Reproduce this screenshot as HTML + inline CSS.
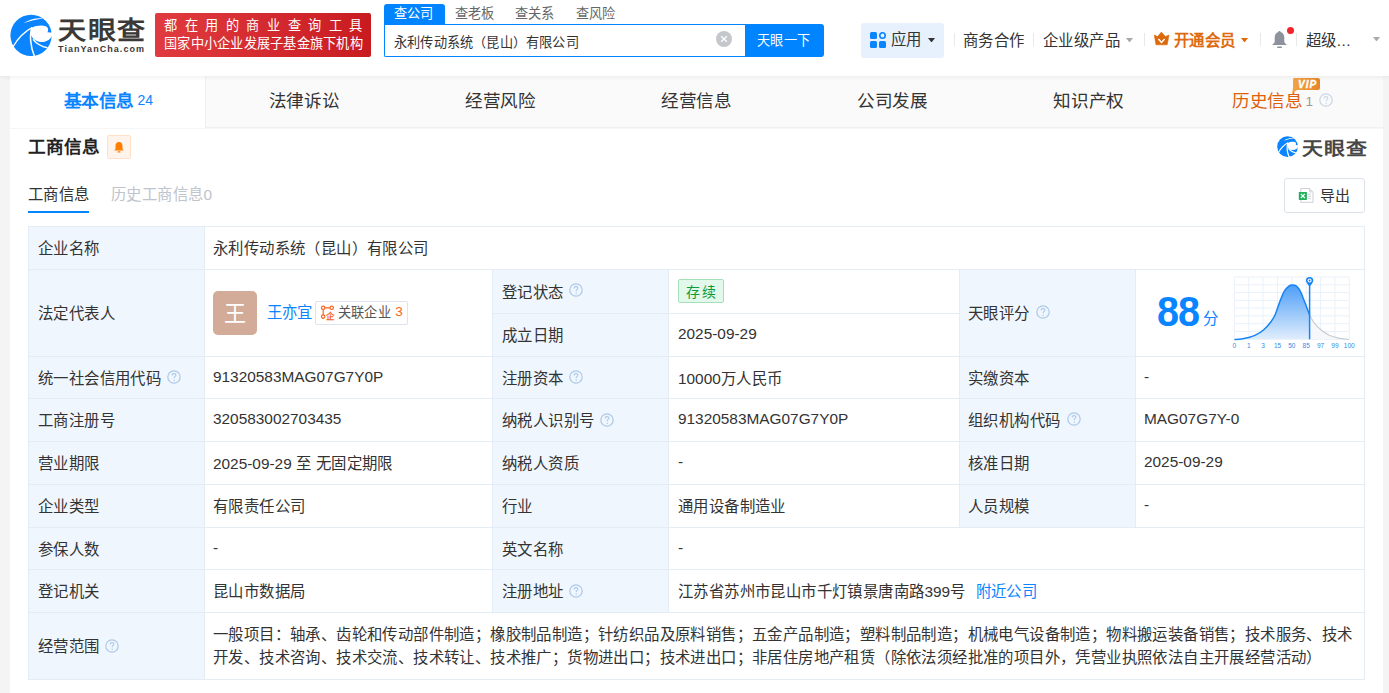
<!DOCTYPE html>
<html lang="zh-CN"><head><meta charset="utf-8">
<style>
*{box-sizing:border-box;margin:0;padding:0}
html,body{width:1389px;height:693px;overflow:hidden;background:#f4f4f4;font-family:"Liberation Sans",sans-serif;color:#333}
body{position:relative}
.a{position:absolute;white-space:nowrap}
.t{position:absolute;white-space:nowrap;font-size:15.4px;color:#333;display:flex;align-items:center}
#hdr{position:absolute;left:0;top:0;width:1389px;height:76px;background:#fff;box-shadow:0 1px 5px rgba(0,0,0,.07);z-index:2}
#card{position:absolute;left:10px;top:76px;width:1373px;height:640px;background:#fff}
.hl{position:absolute;height:1px;background:#e4ecf5}
.vl{position:absolute;width:1px;background:#e4ecf5}
.lb{position:absolute;background:#f0f6fd}
</style></head>
<body>

<div id="hdr">
  <svg class="a" style="left:8px;top:12px" width="48" height="48" viewBox="0 0 693 693">
    <circle cx="333" cy="337" r="298" fill="#0a84ff"/>
    <path d="M340 228 C400 200 480 185 545 205 C580 220 590 260 568 292 L660 300 L645 318 C625 400 540 445 460 432 C410 422 370 400 345 360 C325 330 325 270 340 228 Z" fill="#fff"/>
    <path d="M222 162 C300 108 420 80 510 93 C420 108 310 126 222 162 Z" fill="#fff"/>
    <path d="M70 505 C150 370 240 280 348 226" stroke="#fff" stroke-width="20" fill="none"/>
    <path d="M345 228 C310 320 320 500 385 650" stroke="#fff" stroke-width="22" fill="none"/>
    <path d="M360 395 C420 470 490 500 570 515" stroke="#fff" stroke-width="22" fill="none"/>
  </svg>
  <div class="a" style="left:57.5px;top:14.5px;font-size:25px;line-height:30px;font-weight:bold;color:#3b3838;letter-spacing:1.5px;transform:scaleX(1.12);transform-origin:left">天眼查</div>
  <div class="a" style="left:58px;top:43px;font-size:9px;line-height:12px;font-weight:bold;color:#3b3838;letter-spacing:1.05px">TianYanCha.com</div>
  <div class="a" style="left:155px;top:13px;width:216px;height:44px;border-radius:2px;background:linear-gradient(90deg,#e03b40,#c81b20)"></div>
  <div class="a" style="left:164px;top:15px;font-size:13.2px;color:#fff;letter-spacing:7.6px">都在用的商业查询工具</div>
  <div class="a" style="left:164px;top:33px;font-size:13.2px;color:#fff;letter-spacing:0.25px">国家中小企业发展子基金旗下机构</div>

  <div class="a" style="left:384px;top:4px;width:61px;height:21px;background:#0084ff;border-radius:3px 3px 0 0"></div>
  <div class="a" style="left:394px;top:3px;font-size:13.2px;color:#fff;letter-spacing:0.2px">查公司</div>
  <div class="a" style="left:455px;top:3px;font-size:13.2px;color:#666;letter-spacing:0.2px">查老板</div>
  <div class="a" style="left:515px;top:3px;font-size:13.2px;color:#666;letter-spacing:0.2px">查关系</div>
  <div class="a" style="left:576px;top:3px;font-size:13.2px;color:#666;letter-spacing:0.2px">查风险</div>
  <div class="a" style="left:384px;top:24px;width:362px;height:33px;border:1px solid #0084ff;border-right:none;border-radius:0 0 0 2px"></div>
  <div class="a" style="left:394px;top:31.5px;font-size:13.2px;color:#333;letter-spacing:0.2px">永利传动系统（昆山）有限公司</div>
  <svg class="a" style="left:716px;top:31px" width="16" height="16" viewBox="0 0 16 16"><circle cx="8" cy="8" r="8" fill="#c4c7cc"/><path d="M5.2 5.2 L10.8 10.8 M10.8 5.2 L5.2 10.8" stroke="#fff" stroke-width="1.3"/></svg>
  <div class="a" style="left:745px;top:24px;width:79px;height:33px;background:#0084ff;border-radius:0 3px 3px 0"></div>
  <div class="a" style="left:757px;top:30px;font-size:13.2px;color:#fff;letter-spacing:0.3px">天眼一下</div>

  <div class="a" style="left:861px;top:23px;width:83px;height:35px;background:#e6f1fd;border-radius:3px"></div>
  <svg class="a" style="left:870px;top:32px" width="16" height="16" viewBox="0 0 16 16"><rect x="0" y="0" width="7" height="7" rx="1.5" fill="#0a84ff"/><circle cx="12.5" cy="3.5" r="2.7" fill="none" stroke="#0a84ff" stroke-width="1.6"/><rect x="0" y="9" width="7" height="7" rx="1.5" fill="#0a84ff"/><rect x="9" y="9" width="7" height="7" rx="1.5" fill="#0a84ff"/></svg>
  <div class="a" style="left:891px;top:27px;font-size:15.4px;color:#333;letter-spacing:0.4px">应用</div>
  <svg class="a" style="left:927.5px;top:37.5px" width="7" height="4.5" viewBox="0 0 7 4.5"><path d="M0 0 L7 0 L3.5 4.5 Z" fill="#333"/></svg>
  <div class="a" style="left:954px;top:33px;width:1px;height:13px;background:#e8e8e8"></div>
  <div class="a" style="left:963px;top:27.5px;font-size:15.4px;color:#333;letter-spacing:0.4px">商务合作</div>
  <div class="a" style="left:1033px;top:33px;width:1px;height:13px;background:#e8e8e8"></div>
  <div class="a" style="left:1043px;top:27.5px;font-size:15.4px;color:#333;letter-spacing:0.4px">企业级产品</div>
  <svg class="a" style="left:1125.5px;top:37.5px" width="7" height="4.5" viewBox="0 0 7 4.5"><path d="M0 0 L7 0 L3.5 4.5 Z" fill="#aaa"/></svg>
  <div class="a" style="left:1144px;top:33px;width:1px;height:13px;background:#e8e8e8"></div>
  <svg class="a" style="left:1150px;top:28px" width="24" height="22" viewBox="0 0 24 22"><path d="M4.3 7.1 L7.6 8.6 L11.4 4.1 L15.3 8.6 L19 7.1 L17.2 16.8 L6 16.8 Z" fill="#dc6a0d" stroke="#dc6a0d" stroke-width="0.6" stroke-linejoin="round"/><path d="M8.4 10.9 L11.5 14.4 L14.6 10.9" stroke="#fff" stroke-width="1.5" fill="none"/></svg>
  <div class="a" style="left:1174px;top:27.5px;font-size:15.4px;font-weight:bold;color:#de6b10;letter-spacing:0.4px">开通会员</div>
  <svg class="a" style="left:1240.5px;top:37.5px" width="7" height="4.5" viewBox="0 0 7 4.5"><path d="M0 0 L7 0 L3.5 4.5 Z" fill="#dc6a0d"/></svg>
  <div class="a" style="left:1260px;top:33px;width:1px;height:13px;background:#e8e8e8"></div>
  <svg class="a" style="left:1271px;top:30px" width="17" height="19" viewBox="0 0 17 19"><path d="M8.5 1 C9.3 1 9.6 1.5 9.6 2 C12 2.6 13.3 4.8 13.3 7.5 L13.3 11.5 C13.3 12.6 14.2 13.6 15.6 14.6 L15.6 15 L1.4 15 L1.4 14.6 C2.8 13.6 3.7 12.6 3.7 11.5 L3.7 7.5 C3.7 4.8 5 2.6 7.4 2 C7.4 1.5 7.7 1 8.5 1 Z" fill="#8d939b"/><rect x="6" y="16.6" width="5" height="1.4" rx="0.7" fill="#8d939b"/></svg>
  <div class="a" style="left:1287px;top:27px;width:7px;height:7px;border-radius:50%;background:#f5222d"></div>
  <div class="a" style="left:1296px;top:33px;width:1px;height:13px;background:#e8e8e8"></div>
  <div class="a" style="left:1306px;top:27.5px;font-size:15.4px;color:#333;letter-spacing:0.4px">超级...</div>
  <svg class="a" style="left:1373px;top:36.5px" width="7" height="4.5" viewBox="0 0 7 4.5"><path d="M0 0 L7 0 L3.5 4.5 Z" fill="#aaa"/></svg>
</div>

<div id="card"></div>
<div class="a" style="left:10px;top:76px;width:1373px;height:52px;background:#fafafa;border-bottom:1px solid #f0f0f0"></div>
<div class="a" style="left:10px;top:76px;width:195px;height:52px;background:#fff"></div>
<div class="a" style="left:10px;top:128px;width:1373px;height:1px;background:#f6f6f6"></div>
<div class="a" style="left:63.5px;top:87px;font-size:17.6px;font-weight:bold;color:#0a84ff;letter-spacing:-0.4px">基本信息<span style="font-size:14px;font-weight:normal;margin-left:3.5px;position:relative;top:-2.5px;letter-spacing:0">24</span></div>
<div class="a" style="left:205px;top:76px;width:1px;height:52px;background:#f0f0f0"></div>
<div class="a" style="left:268.8px;top:87px;font-size:17.6px;color:#333;letter-spacing:-0.4px">法律诉讼</div>
<div class="a" style="left:465.0px;top:87px;font-size:17.6px;color:#333;letter-spacing:-0.4px">经营风险</div>
<div class="a" style="left:661.1px;top:87px;font-size:17.6px;color:#333;letter-spacing:-0.4px">经营信息</div>
<div class="a" style="left:857.2px;top:87px;font-size:17.6px;color:#333;letter-spacing:-0.4px">公司发展</div>
<div class="a" style="left:1053.4px;top:87px;font-size:17.6px;color:#333;letter-spacing:-0.4px">知识产权</div>
<div class="a" style="left:1232px;top:87px;font-size:17.6px;color:#e0600a;letter-spacing:-0.4px">历史信息<span style="font-size:13.5px;color:#999;margin-left:3px;position:relative;top:-1.5px">1</span></div>
<svg class="a" style="left:1319px;top:93px" width="14" height="14" viewBox="0 0 14 14"><circle cx="7" cy="7" r="6.2" fill="none" stroke="#c8d6e5" stroke-width="1.2"/><path d="M5.1 5.4 C5.1 4.2 6 3.6 7 3.6 C8.1 3.6 8.9 4.3 8.9 5.2 C8.9 6.3 7.4 6.5 7.2 7.6 L7.2 8.3" fill="none" stroke="#c8d6e5" stroke-width="1.1"/><circle cx="7.2" cy="10.2" r="0.7" fill="#c8d6e5"/></svg>
<svg class="a" style="left:1291px;top:78px" width="30" height="16" viewBox="0 0 30 16"><defs><linearGradient id="vg" x1="0" x2="1"><stop offset="0" stop-color="#f3a545"/><stop offset="1" stop-color="#e6862a"/></linearGradient></defs><path d="M3 0 H27 Q29 0 29 2 V10 Q29 12 27 12 H6 L1 15.5 L2 10 V2 Q2 0 3 0 Z" fill="url(#vg)"/><text x="16.6" y="10.2" text-anchor="middle" font-family="Liberation Sans" font-weight="bold" font-style="italic" font-size="10" letter-spacing="1.1" fill="#fff" stroke="#fff" stroke-width="0.35">VIP</text></svg>
<div class="a" style="left:28px;top:133px;font-size:17.6px;font-weight:bold;color:#222">工商信息</div>
<div class="a" style="left:107px;top:135px;width:24px;height:24px;background:#fff4eb;border:1px solid #ffe0c7;border-radius:2px"></div>
<svg class="a" style="left:113px;top:141px" width="12" height="12" viewBox="0 0 12 12"><path d="M6 1 C3.5 1 2.5 3 2.5 5 L2.5 8 L1.3 9.5 L10.7 9.5 L9.5 8 L9.5 5 C9.5 3 8.5 1 6 1 Z" fill="#ff7d00"/><rect x="4.5" y="10.3" width="3" height="1.3" rx="0.6" fill="#ff7d00"/></svg>
<svg class="a" style="left:1276px;top:135px" width="24" height="24" viewBox="0 0 693 693">
    <circle cx="333" cy="337" r="298" fill="#0a84ff"/>
    <path d="M340 228 C400 200 480 185 545 205 C580 220 590 260 568 292 L660 300 L645 318 C625 400 540 445 460 432 C410 422 370 400 345 360 C325 330 325 270 340 228 Z" fill="#fff"/>
    <path d="M222 166 C300 104 420 76 515 91 C420 112 310 130 222 166 Z" fill="#fff"/>
    <path d="M70 505 C150 370 240 280 348 226" stroke="#fff" stroke-width="34" fill="none"/>
    <path d="M345 228 C310 320 320 500 385 650" stroke="#fff" stroke-width="34" fill="none"/>
    <path d="M360 395 C420 470 490 500 570 515" stroke="#fff" stroke-width="34" fill="none"/>
  </svg>
<div class="a" style="left:1302px;top:135.5px;font-size:18px;line-height:26px;font-weight:bold;color:#474747;letter-spacing:0.8px;transform:scaleX(1.16);transform-origin:left">天眼查</div>
<div class="a" style="left:28px;top:181.5px;font-size:15.4px;color:#333;letter-spacing:0.4px">工商信息</div>
<div class="a" style="left:28px;top:211px;width:61px;height:2px;background:#0084ff"></div>
<div class="a" style="left:111px;top:181.5px;font-size:15.4px;color:#c0c4cc;letter-spacing:0.4px">历史工商信息0</div>
<div class="a" style="left:1284px;top:178px;width:81px;height:35px;border:1px solid #dde2ea;border-radius:3px"></div>
<svg class="a" style="left:1298px;top:187px" width="17" height="17" viewBox="0 0 17 17"><path d="M2.8 1.5 H11.6 L15 4.9 V15.3 H2.8 Z" fill="#fff" stroke="#cdd0d6" stroke-width="1"/><path d="M11.6 1.5 V4.9 H15" fill="#e6e8eb" stroke="#cdd0d6" stroke-width="0.9"/><rect x="0.8" y="5" width="8.1" height="7.9" rx="0.6" fill="#1fb25a"/><path d="M2.9 6.9 L6.8 11 M6.8 6.9 L2.9 11" stroke="#fff" stroke-width="1.2"/><path d="M10.1 7.3 H12.9 M10.1 9.4 H12.9 M10.1 11.4 H12.9" stroke="#c8ccd2" stroke-width="0.9"/></svg>
<div class="a" style="left:1320px;top:183.5px;font-size:15px;color:#333;letter-spacing:0.4px">导出</div>
<div class="lb" style="left:28px;top:226px;width:176px;height:453px"></div>
<div class="lb" style="left:492px;top:269px;width:176px;height:343px"></div>
<div class="lb" style="left:959px;top:269px;width:176px;height:258px"></div>
<div class="a" style="left:28px;top:226px;width:1337px;height:454px;border:1px solid #e4ecf5"></div>
<div class="hl" style="left:28px;top:269px;width:1337px"></div>
<div class="hl" style="left:492px;top:313px;width:468px"></div>
<div class="hl" style="left:28px;top:356px;width:1337px"></div>
<div class="hl" style="left:28px;top:398px;width:1337px"></div>
<div class="hl" style="left:28px;top:441px;width:1337px"></div>
<div class="hl" style="left:28px;top:484px;width:1337px"></div>
<div class="hl" style="left:28px;top:527px;width:1337px"></div>
<div class="hl" style="left:28px;top:569px;width:1337px"></div>
<div class="hl" style="left:28px;top:612px;width:1337px"></div>
<div class="vl" style="left:204px;top:226px;height:454px"></div>
<div class="vl" style="left:492px;top:269px;height:344px"></div>
<div class="vl" style="left:668px;top:269px;height:344px"></div>
<div class="vl" style="left:959px;top:269px;height:259px"></div>
<div class="vl" style="left:1135px;top:269px;height:259px"></div>
<div class="t" style="left:38px;top:226px;height:42px;"><span><span style="letter-spacing:0.4px">企业名称</span></span></div>
<div class="t" style="left:213px;top:226px;height:42px;"><span><span style="letter-spacing:0.4px">永利传动系统（昆山）有限公司</span></span></div>
<div class="t" style="left:38px;top:269px;height:86px;"><span><span style="letter-spacing:0.4px">法定代表人</span></span></div>
<div class="a" style="left:213px;top:291px;width:44px;height:44px;border-radius:5px;background:#d2ab99"></div>
<div class="a" style="left:213px;top:288.5px;width:44px;height:44px;display:flex;align-items:center;justify-content:center;font-size:22px;color:#fff">王</div>
<div class="t" style="left:266.5px;top:268px;height:86px;color:#0a84ff"><span><span style="letter-spacing:0.4px">王亦宜</span></span></div>
<div class="a" style="left:315px;top:301px;width:93px;height:24px;border:1px solid #dde3ef;border-radius:2px"></div>
<svg class="a" style="left:320px;top:304px" width="16" height="17" viewBox="0 0 16 17"><circle cx="3.2" cy="3.8" r="1.7" fill="none" stroke="#f5661e" stroke-width="1.2"/><circle cx="11.7" cy="3.8" r="1.7" fill="none" stroke="#f5661e" stroke-width="1.2"/><circle cx="3.2" cy="12.6" r="1.7" fill="none" stroke="#f5661e" stroke-width="1.2"/><path d="M4.9 3.8 H10 M3.2 5.5 V10.9" stroke="#f5661e" stroke-width="1.2"/><text x="10.3" y="14.6" text-anchor="middle" font-family="Liberation Sans" font-weight="bold" font-size="8.5" fill="#f5661e">企</text></svg>
<div class="t" style="left:338px;top:268px;height:86px;font-size:13.2px;color:#555"><span><span style="letter-spacing:0.2px">关联企业</span><span style="color:#f5661e;margin-left:4.5px;font-size:13.6px;position:relative;top:-0.5px">3</span></span></div>
<div class="t" style="left:502px;top:269px;height:43px;"><span><span style="letter-spacing:0.4px">登记状态</span></span></div>
<svg class="a" style="left:569px;top:283px" width="14" height="14" viewBox="0 0 14 14"><circle cx="7" cy="7" r="6.2" fill="none" stroke="#acc9e8" stroke-width="1.2"/><path d="M5.1 5.4 C5.1 4.2 6 3.6 7 3.6 C8.1 3.6 8.9 4.3 8.9 5.2 C8.9 6.3 7.4 6.5 7.2 7.6 L7.2 8.3" fill="none" stroke="#acc9e8" stroke-width="1.1"/><circle cx="7.2" cy="10.2" r="0.7" fill="#acc9e8"/></svg>
<div class="a" style="left:678px;top:279px;width:46px;height:24px;background:#e2f8ea;border:1px solid #a6e0ba;border-radius:2px"></div>
<div class="t" style="left:686px;top:279px;height:23px;font-size:14px;color:#0f9a3a"><span><span style="letter-spacing:1.6px">存续</span></span></div>
<div class="t" style="left:502px;top:313px;height:42px;"><span><span style="letter-spacing:0.4px">成立日期</span></span></div>
<div class="t" style="left:678px;top:313px;height:42px;"><span>2025-09-29</span></div>
<div class="t" style="left:968px;top:269px;height:86px;"><span><span style="letter-spacing:0.4px">天眼评分</span></span></div>
<svg class="a" style="left:1036px;top:305px" width="14" height="14" viewBox="0 0 14 14"><circle cx="7" cy="7" r="6.2" fill="none" stroke="#acc9e8" stroke-width="1.2"/><path d="M5.1 5.4 C5.1 4.2 6 3.6 7 3.6 C8.1 3.6 8.9 4.3 8.9 5.2 C8.9 6.3 7.4 6.5 7.2 7.6 L7.2 8.3" fill="none" stroke="#acc9e8" stroke-width="1.1"/><circle cx="7.2" cy="10.2" r="0.7" fill="#acc9e8"/></svg>
<div class="a" style="left:1157px;top:286px;font-size:39.6px;line-height:46px;font-weight:bold;color:#0a84ff;letter-spacing:-1px;transform:scaleY(1.07);transform-origin:top">88</div>
<div class="a" style="left:1202.5px;top:306px;font-size:15.4px;color:#0a84ff">分</div>
<svg class="a" style="left:0;top:0" width="1389" height="693" viewBox="0 0 1389 693"><defs><linearGradient id="cg" x1="0" y1="0" x2="0" y2="1"><stop offset="0" stop-color="#4d9ef8"/><stop offset="1" stop-color="#e1eefc"/></linearGradient></defs><line x1="1234.4" y1="277.0" x2="1234.4" y2="339.3" stroke="#e9f1f9" stroke-width="1"/><line x1="1234.4" y1="277.0" x2="1349.3" y2="277.0" stroke="#e9f1f9" stroke-width="1"/><line x1="1248.8" y1="277.0" x2="1248.8" y2="339.3" stroke="#e9f1f9" stroke-width="1"/><line x1="1234.4" y1="284.8" x2="1349.3" y2="284.8" stroke="#e9f1f9" stroke-width="1"/><line x1="1263.1" y1="277.0" x2="1263.1" y2="339.3" stroke="#e9f1f9" stroke-width="1"/><line x1="1234.4" y1="292.6" x2="1349.3" y2="292.6" stroke="#e9f1f9" stroke-width="1"/><line x1="1277.5" y1="277.0" x2="1277.5" y2="339.3" stroke="#e9f1f9" stroke-width="1"/><line x1="1234.4" y1="300.4" x2="1349.3" y2="300.4" stroke="#e9f1f9" stroke-width="1"/><line x1="1291.8" y1="277.0" x2="1291.8" y2="339.3" stroke="#e9f1f9" stroke-width="1"/><line x1="1234.4" y1="308.1" x2="1349.3" y2="308.1" stroke="#e9f1f9" stroke-width="1"/><line x1="1306.2" y1="277.0" x2="1306.2" y2="339.3" stroke="#e9f1f9" stroke-width="1"/><line x1="1234.4" y1="315.9" x2="1349.3" y2="315.9" stroke="#e9f1f9" stroke-width="1"/><line x1="1320.6" y1="277.0" x2="1320.6" y2="339.3" stroke="#e9f1f9" stroke-width="1"/><line x1="1234.4" y1="323.7" x2="1349.3" y2="323.7" stroke="#e9f1f9" stroke-width="1"/><line x1="1334.9" y1="277.0" x2="1334.9" y2="339.3" stroke="#e9f1f9" stroke-width="1"/><line x1="1234.4" y1="331.5" x2="1349.3" y2="331.5" stroke="#e9f1f9" stroke-width="1"/><line x1="1349.3" y1="277.0" x2="1349.3" y2="339.3" stroke="#e9f1f9" stroke-width="1"/><line x1="1234.4" y1="339.3" x2="1349.3" y2="339.3" stroke="#e9f1f9" stroke-width="1"/><path d="M1234.40 339.50 C1235.58 339.40 1239.15 339.23 1241.50 338.90 C1243.85 338.57 1246.18 338.12 1248.50 337.50 C1250.82 336.88 1252.90 336.45 1255.40 335.20 C1257.90 333.95 1261.00 332.12 1263.50 330.00 C1266.00 327.88 1268.48 325.00 1270.40 322.50 C1272.32 320.00 1273.47 318.37 1275.00 315.00 C1276.53 311.63 1278.07 306.23 1279.60 302.30 C1281.13 298.37 1282.65 294.08 1284.20 291.40 C1285.75 288.72 1287.55 287.27 1288.90 286.20 C1290.25 285.13 1291.05 285.00 1292.30 285.00 C1293.55 285.00 1295.05 285.13 1296.40 286.20 C1297.75 287.27 1299.15 289.10 1300.40 291.40 C1301.65 293.70 1302.37 296.07 1303.90 300.00 C1305.43 303.93 1308.65 312.50 1309.60 315.00 L1309.6 339.3 L1234.4 339.3 Z" fill="url(#cg)"/><path d="M1309.60 315.00 C1310.38 316.35 1312.37 320.60 1314.30 323.10 C1316.23 325.60 1318.70 327.98 1321.20 330.00 C1323.70 332.02 1326.42 333.85 1329.30 335.20 C1332.18 336.55 1335.23 337.38 1338.50 338.10 C1341.77 338.82 1347.17 339.27 1348.90 339.50 L1349.3 339.3 L1309.6 339.3 Z" fill="#f6f7f9"/><path d="M1234.40 339.50 C1235.58 339.40 1239.15 339.23 1241.50 338.90 C1243.85 338.57 1246.18 338.12 1248.50 337.50 C1250.82 336.88 1252.90 336.45 1255.40 335.20 C1257.90 333.95 1261.00 332.12 1263.50 330.00 C1266.00 327.88 1268.48 325.00 1270.40 322.50 C1272.32 320.00 1273.47 318.37 1275.00 315.00 C1276.53 311.63 1278.07 306.23 1279.60 302.30 C1281.13 298.37 1282.65 294.08 1284.20 291.40 C1285.75 288.72 1287.55 287.27 1288.90 286.20 C1290.25 285.13 1291.05 285.00 1292.30 285.00 C1293.55 285.00 1295.05 285.13 1296.40 286.20 C1297.75 287.27 1299.15 289.10 1300.40 291.40 C1301.65 293.70 1302.37 296.07 1303.90 300.00 C1305.43 303.93 1308.65 312.50 1309.60 315.00" fill="none" stroke="#1584f7" stroke-width="1.5"/><path d="M1309.60 315.00 C1310.38 316.35 1312.37 320.60 1314.30 323.10 C1316.23 325.60 1318.70 327.98 1321.20 330.00 C1323.70 332.02 1326.42 333.85 1329.30 335.20 C1332.18 336.55 1335.23 337.38 1338.50 338.10 C1341.77 338.82 1347.17 339.27 1348.90 339.50" fill="none" stroke="#c6ccd4" stroke-width="1.1"/><line x1="1309.6" y1="283" x2="1309.6" y2="339.3" stroke="#1584f7" stroke-width="1.5"/><path d="M1305.8999999999999 280.6 A3.7 3.7 0 1 1 1313.3 280.6 Q1313.1 283 1309.6 286.5 Q1306.1 283 1305.8999999999999 280.6 Z" fill="#1584f7"/><circle cx="1309.6" cy="280.6" r="2" fill="#fff"/><circle cx="1309.6" cy="280.6" r="1" fill="#1584f7"/><text x="1234.4" y="348" text-anchor="middle" font-family="Liberation Sans" font-size="6.5" fill="#2f8ae8">0</text><text x="1248.8" y="348" text-anchor="middle" font-family="Liberation Sans" font-size="6.5" fill="#2f8ae8">1</text><text x="1263.1" y="348" text-anchor="middle" font-family="Liberation Sans" font-size="6.5" fill="#2f8ae8">3</text><text x="1277.5" y="348" text-anchor="middle" font-family="Liberation Sans" font-size="6.5" fill="#2f8ae8">15</text><text x="1291.8" y="348" text-anchor="middle" font-family="Liberation Sans" font-size="6.5" fill="#2f8ae8">50</text><text x="1306.2" y="348" text-anchor="middle" font-family="Liberation Sans" font-size="6.5" fill="#2f8ae8">85</text><text x="1320.6" y="348" text-anchor="middle" font-family="Liberation Sans" font-size="6.5" fill="#2f8ae8">97</text><text x="1334.9" y="348" text-anchor="middle" font-family="Liberation Sans" font-size="6.5" fill="#2f8ae8">99</text><text x="1349.3" y="348" text-anchor="middle" font-family="Liberation Sans" font-size="6.5" fill="#2f8ae8">100</text></svg>
<div class="t" style="left:38px;top:356px;height:41px;"><span><span style="letter-spacing:0.4px">统一社会信用代码</span></span></div>
<svg class="a" style="left:167px;top:370px" width="14" height="14" viewBox="0 0 14 14"><circle cx="7" cy="7" r="6.2" fill="none" stroke="#acc9e8" stroke-width="1.2"/><path d="M5.1 5.4 C5.1 4.2 6 3.6 7 3.6 C8.1 3.6 8.9 4.3 8.9 5.2 C8.9 6.3 7.4 6.5 7.2 7.6 L7.2 8.3" fill="none" stroke="#acc9e8" stroke-width="1.1"/><circle cx="7.2" cy="10.2" r="0.7" fill="#acc9e8"/></svg>
<div class="t" style="left:213px;top:356px;height:41px;"><span>91320583MAG07G7Y0P</span></div>
<div class="t" style="left:502px;top:356px;height:41px;"><span><span style="letter-spacing:0.4px">注册资本</span></span></div>
<svg class="a" style="left:569px;top:370px" width="14" height="14" viewBox="0 0 14 14"><circle cx="7" cy="7" r="6.2" fill="none" stroke="#acc9e8" stroke-width="1.2"/><path d="M5.1 5.4 C5.1 4.2 6 3.6 7 3.6 C8.1 3.6 8.9 4.3 8.9 5.2 C8.9 6.3 7.4 6.5 7.2 7.6 L7.2 8.3" fill="none" stroke="#acc9e8" stroke-width="1.1"/><circle cx="7.2" cy="10.2" r="0.7" fill="#acc9e8"/></svg>
<div class="t" style="left:678px;top:356px;height:41px;"><span>10000<span style="letter-spacing:0.4px">万人民币</span></span></div>
<div class="t" style="left:968px;top:356px;height:41px;"><span><span style="letter-spacing:0.4px">实缴资本</span></span></div>
<div class="t" style="left:1144px;top:356px;height:41px;"><span>-</span></div>
<div class="t" style="left:38px;top:398px;height:42px;"><span><span style="letter-spacing:0.4px">工商注册号</span></span></div>
<div class="t" style="left:213px;top:398px;height:42px;"><span>320583002703435</span></div>
<div class="t" style="left:502px;top:398px;height:42px;"><span><span style="letter-spacing:0.4px">纳税人识别号</span></span></div>
<svg class="a" style="left:600px;top:413px" width="14" height="14" viewBox="0 0 14 14"><circle cx="7" cy="7" r="6.2" fill="none" stroke="#acc9e8" stroke-width="1.2"/><path d="M5.1 5.4 C5.1 4.2 6 3.6 7 3.6 C8.1 3.6 8.9 4.3 8.9 5.2 C8.9 6.3 7.4 6.5 7.2 7.6 L7.2 8.3" fill="none" stroke="#acc9e8" stroke-width="1.1"/><circle cx="7.2" cy="10.2" r="0.7" fill="#acc9e8"/></svg>
<div class="t" style="left:678px;top:398px;height:42px;"><span>91320583MAG07G7Y0P</span></div>
<div class="t" style="left:968px;top:398px;height:42px;"><span><span style="letter-spacing:0.4px">组织机构代码</span></span></div>
<svg class="a" style="left:1067px;top:412px" width="14" height="14" viewBox="0 0 14 14"><circle cx="7" cy="7" r="6.2" fill="none" stroke="#acc9e8" stroke-width="1.2"/><path d="M5.1 5.4 C5.1 4.2 6 3.6 7 3.6 C8.1 3.6 8.9 4.3 8.9 5.2 C8.9 6.3 7.4 6.5 7.2 7.6 L7.2 8.3" fill="none" stroke="#acc9e8" stroke-width="1.1"/><circle cx="7.2" cy="10.2" r="0.7" fill="#acc9e8"/></svg>
<div class="t" style="left:1144px;top:398px;height:42px;"><span>MAG07G7Y-0</span></div>
<div class="t" style="left:38px;top:441px;height:42px;"><span><span style="letter-spacing:0.4px">营业期限</span></span></div>
<div class="t" style="left:213px;top:441px;height:42px;"><span>2025-09-29 <span style="letter-spacing:0.4px">至</span> <span style="letter-spacing:0.4px">无固定期限</span></span></div>
<div class="t" style="left:502px;top:441px;height:42px;"><span><span style="letter-spacing:0.4px">纳税人资质</span></span></div>
<div class="t" style="left:678px;top:441px;height:42px;"><span>-</span></div>
<div class="t" style="left:968px;top:441px;height:42px;"><span><span style="letter-spacing:0.4px">核准日期</span></span></div>
<div class="t" style="left:1144px;top:441px;height:42px;"><span>2025-09-29</span></div>
<div class="t" style="left:38px;top:484px;height:42px;"><span><span style="letter-spacing:0.4px">企业类型</span></span></div>
<div class="t" style="left:213px;top:484px;height:42px;"><span><span style="letter-spacing:0.4px">有限责任公司</span></span></div>
<div class="t" style="left:502px;top:484px;height:42px;"><span><span style="letter-spacing:0.4px">行业</span></span></div>
<div class="t" style="left:678px;top:484px;height:42px;"><span><span style="letter-spacing:0.4px">通用设备制造业</span></span></div>
<div class="t" style="left:968px;top:484px;height:42px;"><span><span style="letter-spacing:0.4px">人员规模</span></span></div>
<div class="t" style="left:1144px;top:484px;height:42px;"><span>-</span></div>
<div class="t" style="left:38px;top:527px;height:41px;"><span><span style="letter-spacing:0.4px">参保人数</span></span></div>
<div class="t" style="left:213px;top:527px;height:41px;"><span>-</span></div>
<div class="t" style="left:502px;top:527px;height:41px;"><span><span style="letter-spacing:0.4px">英文名称</span></span></div>
<div class="t" style="left:678px;top:527px;height:41px;"><span>-</span></div>
<div class="t" style="left:38px;top:569px;height:42px;"><span><span style="letter-spacing:0.4px">登记机关</span></span></div>
<div class="t" style="left:213px;top:569px;height:42px;"><span><span style="letter-spacing:0.4px">昆山市数据局</span></span></div>
<div class="t" style="left:502px;top:569px;height:42px;"><span><span style="letter-spacing:0.4px">注册地址</span></span></div>
<svg class="a" style="left:569px;top:584px" width="14" height="14" viewBox="0 0 14 14"><circle cx="7" cy="7" r="6.2" fill="none" stroke="#acc9e8" stroke-width="1.2"/><path d="M5.1 5.4 C5.1 4.2 6 3.6 7 3.6 C8.1 3.6 8.9 4.3 8.9 5.2 C8.9 6.3 7.4 6.5 7.2 7.6 L7.2 8.3" fill="none" stroke="#acc9e8" stroke-width="1.1"/><circle cx="7.2" cy="10.2" r="0.7" fill="#acc9e8"/></svg>
<div class="t" style="left:678px;top:569px;height:42px;"><span><span style="letter-spacing:0.4px">江苏省苏州市昆山市千灯镇景唐南路</span>399<span style="letter-spacing:0.4px">号</span><span style="color:#0a84ff;margin-left:10px"><span style="letter-spacing:0.4px">附近公司</span></span></span></div>
<div class="t" style="left:38px;top:612px;height:66px;"><span><span style="letter-spacing:0.4px">经营范围</span></span></div>
<svg class="a" style="left:105px;top:639px" width="14" height="14" viewBox="0 0 14 14"><circle cx="7" cy="7" r="6.2" fill="none" stroke="#acc9e8" stroke-width="1.2"/><path d="M5.1 5.4 C5.1 4.2 6 3.6 7 3.6 C8.1 3.6 8.9 4.3 8.9 5.2 C8.9 6.3 7.4 6.5 7.2 7.6 L7.2 8.3" fill="none" stroke="#acc9e8" stroke-width="1.1"/><circle cx="7.2" cy="10.2" r="0.7" fill="#acc9e8"/></svg>
<div class="a" style="left:213px;top:623px;font-size:15.4px;line-height:23px;color:#333"><span style="letter-spacing:0.4px">一般项目：轴承、齿轮和传动部件制造；橡胶制品制造；针纺织品及原料销售；五金产品制造；塑料制品制造；机械电气设备制造；物料搬运装备销售；技术服务、技术</span><br><span style="letter-spacing:0.4px">开发、技术咨询、技术交流、技术转让、技术推广；货物进出口；技术进出口；非居住房地产租赁（除依法须经批准的项目外，凭营业执照依法自主开展经营活动）</span></div>
</body></html>
